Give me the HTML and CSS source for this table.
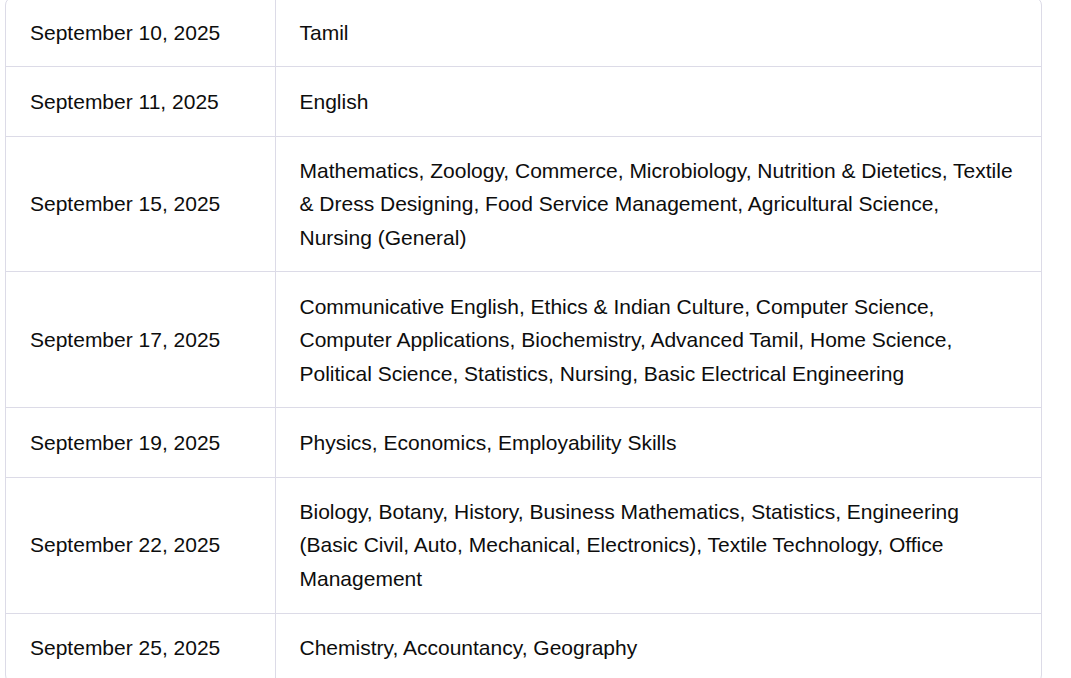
FILE: index.html
```html
<!DOCTYPE html>
<html lang="en">
<head>
<meta charset="utf-8">
<title>Exam Schedule</title>
<link rel="stylesheet" href="styles.css">
</head>
<body>
<div class="table-wrap">
  <table class="schedule">
    <tbody>
      <tr><td class="date">September 10, 2025</td><td class="subj">Tamil</td></tr>
      <tr><td class="date">September 11, 2025</td><td class="subj">English</td></tr>
      <tr><td class="date">September 15, 2025</td><td class="subj">Mathematics, Zoology, Commerce, Microbiology, Nutrition &amp; Dietetics, Textile &amp; Dress Designing, Food Service Management, Agricultural Science, Nursing (General)</td></tr>
      <tr><td class="date">September 17, 2025</td><td class="subj">Communicative English, Ethics &amp; Indian Culture, Computer Science, Computer Applications, Biochemistry, Advanced Tamil, Home Science, Political Science, Statistics, Nursing, Basic Electrical Engineering</td></tr>
      <tr><td class="date">September 19, 2025</td><td class="subj">Physics, Economics, Employability Skills</td></tr>
      <tr><td class="date">September 22, 2025</td><td class="subj">Biology, Botany, History, Business Mathematics, Statistics, Engineering (Basic Civil, Auto, Mechanical, Electronics), Textile Technology, Office Management</td></tr>
      <tr><td class="date">September 25, 2025</td><td class="subj">Chemistry, Accountancy, Geography</td></tr>
    </tbody>
  </table>
</div>
</body>
</html>
```
FILE: styles.css
```css
html, body {
  margin: 0;
  padding: 0;
  background: #ffffff;
}

body {
  font-family: "Liberation Sans", Arial, sans-serif;
  color: #0d0d0d;
  overflow: hidden;
}

.table-wrap {
  margin: -3px 0 0 5px;
  width: 1037px;
  box-sizing: border-box;
  border: 1px solid #dcdbe7;
  border-radius: 8px;
  overflow: hidden;
}

.schedule {
  width: 100%;
  border-collapse: collapse;
  table-layout: fixed;
}

.schedule td {
  font-size: 21px;
  line-height: 33.3px;
  padding: 17.5px 26px 17.5px 24px;
  vertical-align: middle;
  border-bottom: 1px solid #dcdbe7;
}

.schedule tr:last-child td {
  border-bottom: none;
}

.schedule td.date {
  width: 269px;
  box-sizing: border-box;
  border-right: 1px solid #dcdbe7;
  white-space: nowrap;
}
```
